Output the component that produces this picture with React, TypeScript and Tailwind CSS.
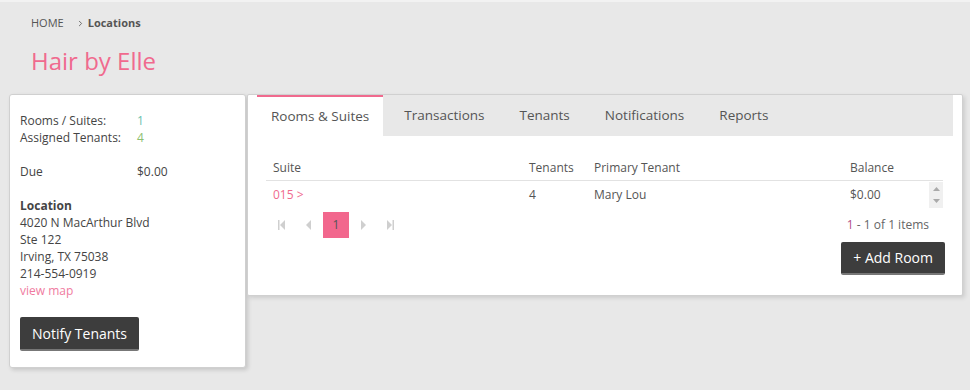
import { ChevronRight } from 'lucide-react';

const pink = 'text-[#f06a8e]';

function PagerIcon({ kind }: { kind: 'first' | 'prev' | 'next' | 'last' }) {
  return (
    <svg width="8" height="10" viewBox="0 0 8 10" className="fill-[#cfcfcf]">
      {kind === 'first' && (
        <>
          <rect x="0" y="0" width="1.5" height="10" />
          <polygon points="7,0 7,10 2,5" />
        </>
      )}
      {kind === 'prev' && <polygon points="6,0 6,10 1,5" />}
      {kind === 'next' && <polygon points="2,0 2,10 7,5" />}
      {kind === 'last' && (
        <>
          <polygon points="1,0 1,10 6,5" />
          <rect x="6.5" y="0" width="1.5" height="10" />
        </>
      )}
    </svg>
  );
}

export default function App() {
  const tabs = ['Rooms & Suites', 'Transactions', 'Tenants', 'Notifications', 'Reports'];

  return (
    <main className="min-h-[390px] bg-[#e8e8e8] font-['Open_Sans',sans-serif] text-[#444]">
      <div className="border-t-2 border-[#f2f2f2] px-[31px] pt-[13px]">
        <div className="flex items-center text-[11px] leading-[16px] text-[#555]">
          <span>HOME</span>
          <ChevronRight size={9} strokeWidth={2.5} className="ml-[12px] mr-[3px] text-[#666]" />
          <span className="font-bold text-[#555]">Locations</span>
        </div>
        <h1 className={`mt-[14px] text-[24px] leading-[32px] ${pink}`}>Hair by Elle</h1>
      </div>

      <div className="mt-[17px] flex items-start gap-[1px] pl-[9px] pr-[7px]">
        <aside className="w-[237px] rounded-[3px] border border-[#d0d0d0] bg-white px-[10px] pt-[17px] pb-[16px] text-[12px] leading-[17px] text-[#444] shadow-[2px_2px_4px_rgba(0,0,0,0.15)]">
          <div className="flex">
            <span className="w-[117px]">Rooms / Suites:</span>
            <span className="text-[#6cbfae]">1</span>
          </div>
          <div className="flex">
            <span className="w-[117px]">Assigned Tenants:</span>
            <span className="text-[#8dbf70]">4</span>
          </div>
          <div className="mt-[17px] flex">
            <span className="w-[117px]">Due</span>
            <span>$0.00</span>
          </div>
          <div className="mt-[17px] font-bold">Location</div>
          <div>4020 N MacArthur Blvd</div>
          <div>Ste 122</div>
          <div>Irving, TX 75038</div>
          <div>214-554-0919</div>
          <div className="text-[#f07ba0]">view map</div>
          <button className="mt-[18px] h-[34px] rounded-[2px] border-b-2 border-[#777] bg-[#3d3d3d] px-[12px] text-[14px] text-white">
            Notify Tenants
          </button>
        </aside>

        <section className="flex-1 rounded-[2px] border border-[#d0d0d0] bg-white px-[9px] pb-[20px] shadow-[2px_2px_4px_rgba(0,0,0,0.12)]">
          <div className="flex h-[41px] gap-[7px] bg-[#e8e8e8] text-[13.5px] text-[#555]">
            {tabs.map((t, i) => (
              <div
                key={t}
                className={
                  i === 0
                    ? 'flex items-center border-t-2 border-[#f06a8e] bg-white px-[14px]'
                    : 'flex items-center px-[14px]'
                }
              >
                {t}
              </div>
            ))}
          </div>

          <div className="ml-[9px] mr-[10px] mt-[19px] text-[12px] text-[#555]">
            <div className="flex h-[26px] items-center border-b border-[#e2e2e2]">
              <div className="w-[256px] pl-[7px]">Suite</div>
              <div className="w-[65px] pl-[7px]">Tenants</div>
              <div className="w-[256px] pl-[7px]">Primary Tenant</div>
              <div className="w-[86px] pl-[7px]">Balance</div>
            </div>
            <div className="mt-[1px] flex h-[26px] items-center">
              <div className={`w-[256px] pl-[7px] ${pink}`}>015 &gt;</div>
              <div className="w-[65px] pl-[7px]">4</div>
              <div className="w-[256px] pl-[7px]">Mary Lou</div>
              <div className="w-[86px] pl-[7px]">$0.00</div>
              <div className="flex h-full w-[14px] flex-col items-center justify-between bg-[#f0f0f0] py-[5px]">
                <svg width="7" height="4" viewBox="0 0 7 4" className="fill-[#aaa]">
                  <polygon points="0,4 7,4 3.5,0" />
                </svg>
                <svg width="7" height="4" viewBox="0 0 7 4" className="fill-[#aaa]">
                  <polygon points="0,0 7,0 3.5,4" />
                </svg>
              </div>
            </div>

            <div className="mt-[4px] flex items-center justify-between pr-[14px]">
              <div className="ml-[3px] flex gap-[1px]">
                <span className="flex h-[26px] w-[26px] items-center justify-center"><PagerIcon kind="first" /></span>
                <span className="flex h-[26px] w-[26px] items-center justify-center"><PagerIcon kind="prev" /></span>
                <span className="flex h-[26px] w-[26px] items-center justify-center bg-[#f2678d] text-[#555]">1</span>
                <span className="flex h-[26px] w-[26px] items-center justify-center"><PagerIcon kind="next" /></span>
                <span className="flex h-[26px] w-[26px] items-center justify-center"><PagerIcon kind="last" /></span>
              </div>
              <div className="text-[12px] text-[#666]">
                <span className="text-[#b2508a]">1</span> - 1 of 1 items
              </div>
            </div>

            <div className="-mr-[2px] mt-[4px] flex justify-end">
              <button className="h-[33px] rounded-[2px] border-b-2 border-[#777] bg-[#3d3d3d] px-[12px] text-[14px] text-white">
                + Add Room
              </button>
            </div>
          </div>
        </section>
      </div>
    </main>
  );
}
